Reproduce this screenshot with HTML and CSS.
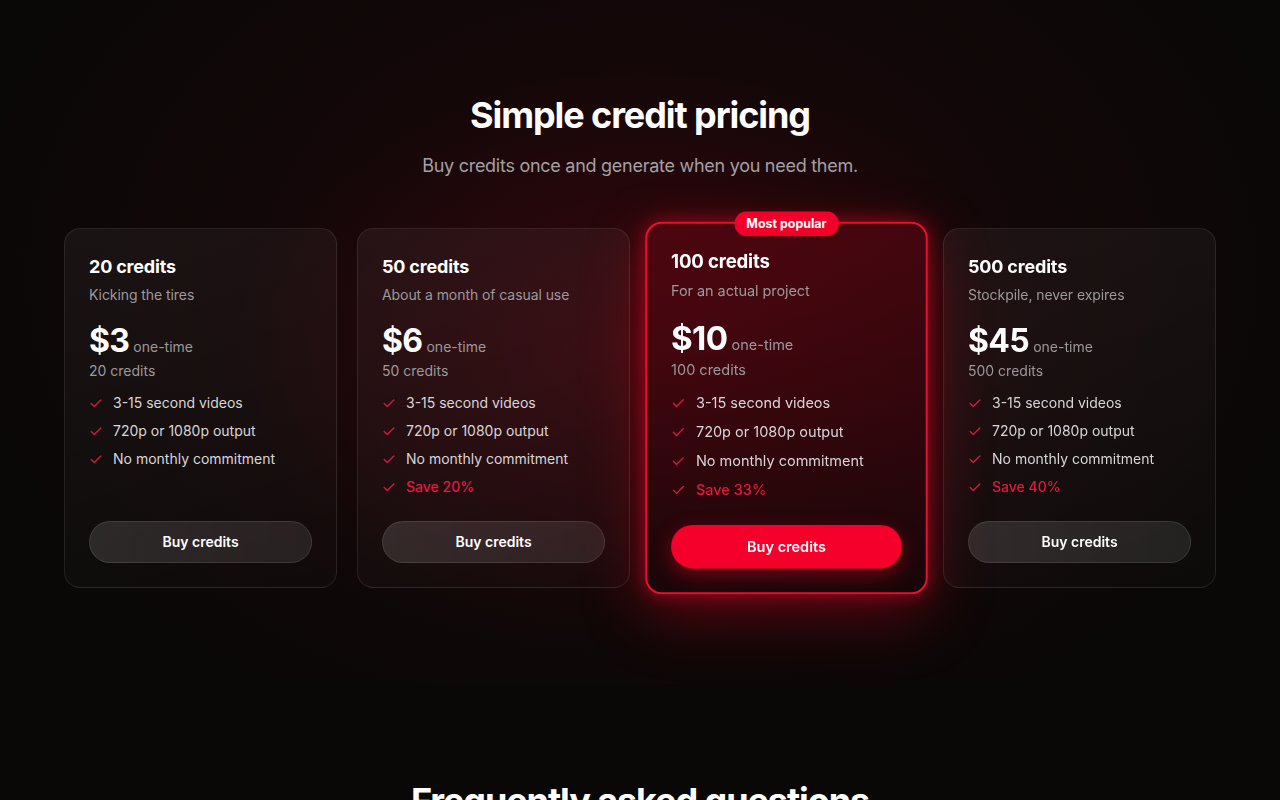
FILE: index.html
```html
<!DOCTYPE html>
<html lang="en">
<head>
<meta charset="utf-8">
<title>Simple credit pricing</title>
<link rel="stylesheet" href="styles.css">
</head>
<body>
<main class="page">
  <section class="pricing">
    <h1 class="title">Simple credit pricing</h1>
    <p class="subtitle">Buy credits once and generate when you need them.</p>
    <div class="plans">
      <article class="plan">
        <h2 class="plan-name">20 credits</h2>
        <p class="plan-desc">Kicking the tires</p>
        <div class="price-row"><span class="price">$3</span><span class="period">one-time</span></div>
        <p class="credits">20 credits</p>
        <ul class="features">
          <li><svg class="check" viewBox="0 0 16 16"><path d="M2.5 8.5l3.5 3.5 7.5-7.5"/></svg>3-15 second videos</li>
          <li><svg class="check" viewBox="0 0 16 16"><path d="M2.5 8.5l3.5 3.5 7.5-7.5"/></svg>720p or 1080p output</li>
          <li><svg class="check" viewBox="0 0 16 16"><path d="M2.5 8.5l3.5 3.5 7.5-7.5"/></svg>No monthly commitment</li>
        </ul>
        <button class="buy">Buy credits</button>
      </article>
      <article class="plan">
        <h2 class="plan-name">50 credits</h2>
        <p class="plan-desc">About a month of casual use</p>
        <div class="price-row"><span class="price">$6</span><span class="period">one-time</span></div>
        <p class="credits">50 credits</p>
        <ul class="features">
          <li><svg class="check" viewBox="0 0 16 16"><path d="M2.5 8.5l3.5 3.5 7.5-7.5"/></svg>3-15 second videos</li>
          <li><svg class="check" viewBox="0 0 16 16"><path d="M2.5 8.5l3.5 3.5 7.5-7.5"/></svg>720p or 1080p output</li>
          <li><svg class="check" viewBox="0 0 16 16"><path d="M2.5 8.5l3.5 3.5 7.5-7.5"/></svg>No monthly commitment</li>
          <li class="save"><svg class="check" viewBox="0 0 16 16"><path d="M2.5 8.5l3.5 3.5 7.5-7.5"/></svg>Save 20%</li>
        </ul>
        <button class="buy">Buy credits</button>
      </article>
      <article class="plan popular">
        <span class="badge">Most popular</span>
        <h2 class="plan-name">100 credits</h2>
        <p class="plan-desc">For an actual project</p>
        <div class="price-row"><span class="price">$10</span><span class="period">one-time</span></div>
        <p class="credits">100 credits</p>
        <ul class="features">
          <li><svg class="check" viewBox="0 0 16 16"><path d="M2.5 8.5l3.5 3.5 7.5-7.5"/></svg>3-15 second videos</li>
          <li><svg class="check" viewBox="0 0 16 16"><path d="M2.5 8.5l3.5 3.5 7.5-7.5"/></svg>720p or 1080p output</li>
          <li><svg class="check" viewBox="0 0 16 16"><path d="M2.5 8.5l3.5 3.5 7.5-7.5"/></svg>No monthly commitment</li>
          <li class="save"><svg class="check" viewBox="0 0 16 16"><path d="M2.5 8.5l3.5 3.5 7.5-7.5"/></svg>Save 33%</li>
        </ul>
        <button class="buy buy-primary">Buy credits</button>
      </article>
      <article class="plan">
        <h2 class="plan-name">500 credits</h2>
        <p class="plan-desc">Stockpile, never expires</p>
        <div class="price-row"><span class="price">$45</span><span class="period">one-time</span></div>
        <p class="credits">500 credits</p>
        <ul class="features">
          <li><svg class="check" viewBox="0 0 16 16"><path d="M2.5 8.5l3.5 3.5 7.5-7.5"/></svg>3-15 second videos</li>
          <li><svg class="check" viewBox="0 0 16 16"><path d="M2.5 8.5l3.5 3.5 7.5-7.5"/></svg>720p or 1080p output</li>
          <li><svg class="check" viewBox="0 0 16 16"><path d="M2.5 8.5l3.5 3.5 7.5-7.5"/></svg>No monthly commitment</li>
          <li class="save"><svg class="check" viewBox="0 0 16 16"><path d="M2.5 8.5l3.5 3.5 7.5-7.5"/></svg>Save 40%</li>
        </ul>
        <button class="buy">Buy credits</button>
      </article>
    </div>
  </section>
  <section class="faq">
    <h2 class="title">Frequently asked questions</h2>
  </section>
</main>
</body>
</html>
```

FILE: styles.css
```css
* { box-sizing: border-box; }
html, body { margin: 0; padding: 0; }
body {
  background: #0a0707;
  color: #fafafa;
  font-family: Inter, "Noto Sans", "DejaVu Sans", sans-serif;
  overflow: hidden;
}
.page { min-height: 800px; }
.pricing {
  padding: 95px 0 96px;
  background:
    radial-gradient(ellipse 32% 42% at 50% 52%, rgba(150, 8, 28, 0.22), rgba(150, 8, 28, 0) 100%),
    radial-gradient(ellipse 55% 75% at 50% 40%, rgba(120, 6, 22, 0.16), rgba(120, 6, 22, 0) 100%);
}
.title {
  margin: 0;
  text-align: center;
  font-size: 36px;
  line-height: 40px;
  font-weight: 700;
  letter-spacing: -0.03em;
  color: #ffffff;
}
.subtitle {
  margin: 17px 0 0;
  text-align: center;
  font-size: 18px;
  line-height: 28px;
  letter-spacing: -0.015em;
  color: #a3a0a4;
}
.plans {
  width: 1152px;
  margin: 48px auto 0;
  display: grid;
  grid-template-columns: repeat(4, 1fr);
  gap: 20px;
  align-items: stretch;
}
.plan {
  position: relative;
  display: flex;
  flex-direction: column;
  padding: 26px 24px 24px;
  border: 1px solid rgba(255, 255, 255, 0.09);
  border-radius: 16px;
  background: linear-gradient(160deg, rgba(255, 255, 255, 0.05), rgba(255, 255, 255, 0.015));
}
.plan-name {
  margin: 0;
  font-size: 18px;
  line-height: 24px;
  font-weight: 700;
  letter-spacing: -0.01em;
  color: #ffffff;
}
.plan-desc {
  margin: 6px 0 0;
  font-size: 14px;
  line-height: 20px;
  letter-spacing: -0.005em;
  color: #9c999b;
}
.price-row {
  margin-top: 16px;
  display: flex;
  align-items: baseline;
  gap: 4px;
}
.price {
  font-size: 32px;
  line-height: 40px;
  font-weight: 700;
  letter-spacing: -0.02em;
  color: #ffffff;
}
.period {
  font-size: 14px;
  line-height: 20px;
  color: #9c999b;
}
.credits {
  margin: 0;
  font-size: 14px;
  line-height: 20px;
  color: #9c999b;
}
.features {
  list-style: none;
  margin: 12px 0 24px;
  padding: 0;
  display: flex;
  flex-direction: column;
  gap: 8px;
}
.features li {
  display: flex;
  align-items: center;
  gap: 10px;
  font-size: 14px;
  line-height: 20px;
  color: #d8d6d8;
}
.features li.save {
  color: #e5183f;
  font-weight: 500;
}
.check {
  width: 14px;
  height: 14px;
  flex: none;
  fill: none;
  stroke: #d81a3c;
  stroke-width: 1.5;
  stroke-linecap: round;
  stroke-linejoin: round;
}
.buy {
  margin-top: auto;
  width: 100%;
  height: 42px;
  border: 1px solid rgba(255, 255, 255, 0.1);
  border-radius: 999px;
  background: linear-gradient(90deg, rgba(255, 255, 255, 0.12), rgba(255, 255, 255, 0.09));
  color: #ffffff;
  font-family: inherit;
  font-size: 14px;
  font-weight: 600;
  line-height: 20px;
  cursor: pointer;
}
.popular {
  transform: scale(1.035);
  border: 2px solid #ea1030;
  padding: 25px 23px 23px;
  background: linear-gradient(180deg, rgba(120, 6, 22, 0.45), rgba(30, 6, 10, 0.6));
  box-shadow: 0 0 18px rgba(255, 10, 45, 0.45), 0 20px 60px rgba(220, 0, 35, 0.35);
}
.badge {
  position: absolute;
  top: -12px;
  left: 50%;
  transform: translateX(-50%);
  padding: 4px 12px;
  border-radius: 999px;
  background: #f2002a;
  color: #ffffff;
  font-size: 12px;
  line-height: 16px;
  font-weight: 700;
  white-space: nowrap;
}
.buy-primary {
  border: none;
  background: #f5002a;
  box-shadow: 0 6px 20px rgba(255, 0, 40, 0.4);
}
.faq {
  padding: 97px 0 0;
}
```
